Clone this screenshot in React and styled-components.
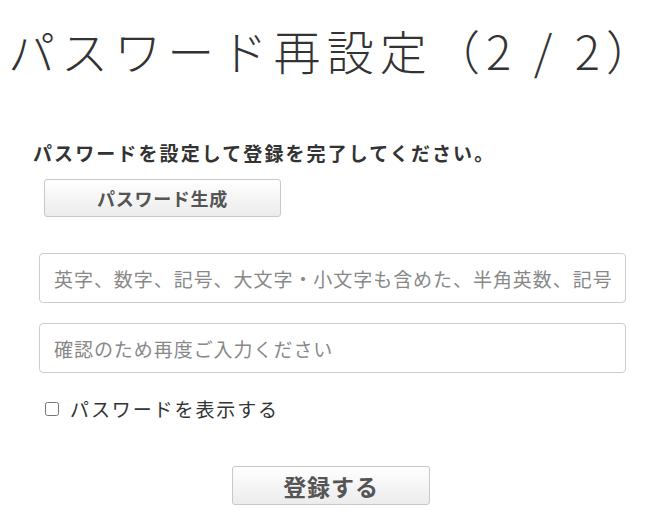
import styled, { createGlobalStyle } from 'styled-components'

const GlobalStyle = createGlobalStyle`
  body {
    margin: 0;
    background: #fff;
    font-family: "Noto Sans CJK JP", "Noto Sans", sans-serif;
    color: #333;
  }
`

const Page = styled.div`
  padding: 0 0 0 8px;
`

const Title = styled.h1`
  margin: 20px 0 0;
  font-size: 47px;
  font-weight: 300;
  line-height: 60px;
  letter-spacing: 0.13em;
  white-space: nowrap;
  color: #333;
`

const Form = styled.div`
  display: flex;
  flex-direction: column;
  align-items: flex-start;
  padding: 0 0 0 25px;
`

const Lead = styled.p`
  margin: 61px 0 0;
  font-size: 19px;
  font-weight: 700;
  line-height: 24px;
  letter-spacing: 0.11em;
  color: #333;
`

const Button = styled.button`
  display: flex;
  align-items: center;
  justify-content: center;
  width: ${(props) => props.width}px;
  height: ${(props) => props.height}px;
  margin: ${(props) => props.margin};
  padding: 0;
  font-family: inherit;
  font-size: ${(props) => props.size}px;
  font-weight: 700;
  letter-spacing: 0.04em;
  color: #555;
  background: linear-gradient(#fff, #ececec);
  border: 1px solid #c8c8c8;
  border-radius: 3px;
  cursor: pointer;
`

const Field = styled.input`
  width: 587px;
  height: 50px;
  box-sizing: border-box;
  margin: ${(props) => props.margin};
  padding: 0 14px;
  font-family: inherit;
  font-size: 19px;
  letter-spacing: 0.05em;
  border: 1px solid #ccc;
  border-radius: 4px;
  background: #fff;
  &::placeholder {
    color: #888;
  }
`

const CheckRow = styled.label`
  display: flex;
  align-items: center;
  gap: 11px;
  margin: 22px 0 0 12px;
  font-size: 19px;
  letter-spacing: 0.1em;
  color: #333;
  input {
    margin: 0;
    width: 14px;
    height: 14px;
  }
`

const Footer = styled.div`
  align-self: stretch;
  display: flex;
  justify-content: center;
  padding-right: 30px;
`

export default function App() {
  return (
    <Page>
      <GlobalStyle />
      <Title>パスワード再設定（2 / 2）</Title>
      <Form>
        <Lead>パスワードを設定して登録を完了してください。</Lead>
        <Button width={237} height={38} size={18} margin="14px 0 0 11px">
          パスワード生成
        </Button>
        <Field
          type="password"
          margin="36px 0 0 6px"
          placeholder="英字、数字、記号、大文字・小文字も含めた、半角英数、記号"
        />
        <Field
          type="password"
          margin="20px 0 0 6px"
          placeholder="確認のため再度ご入力ください"
        />
        <CheckRow>
          <input type="checkbox" />
          パスワードを表示する
        </CheckRow>
        <Footer>
          <Button width={198} height={39} size={23} margin="44px 0 0 0">
            登録する
          </Button>
        </Footer>
      </Form>
    </Page>
  )
}
